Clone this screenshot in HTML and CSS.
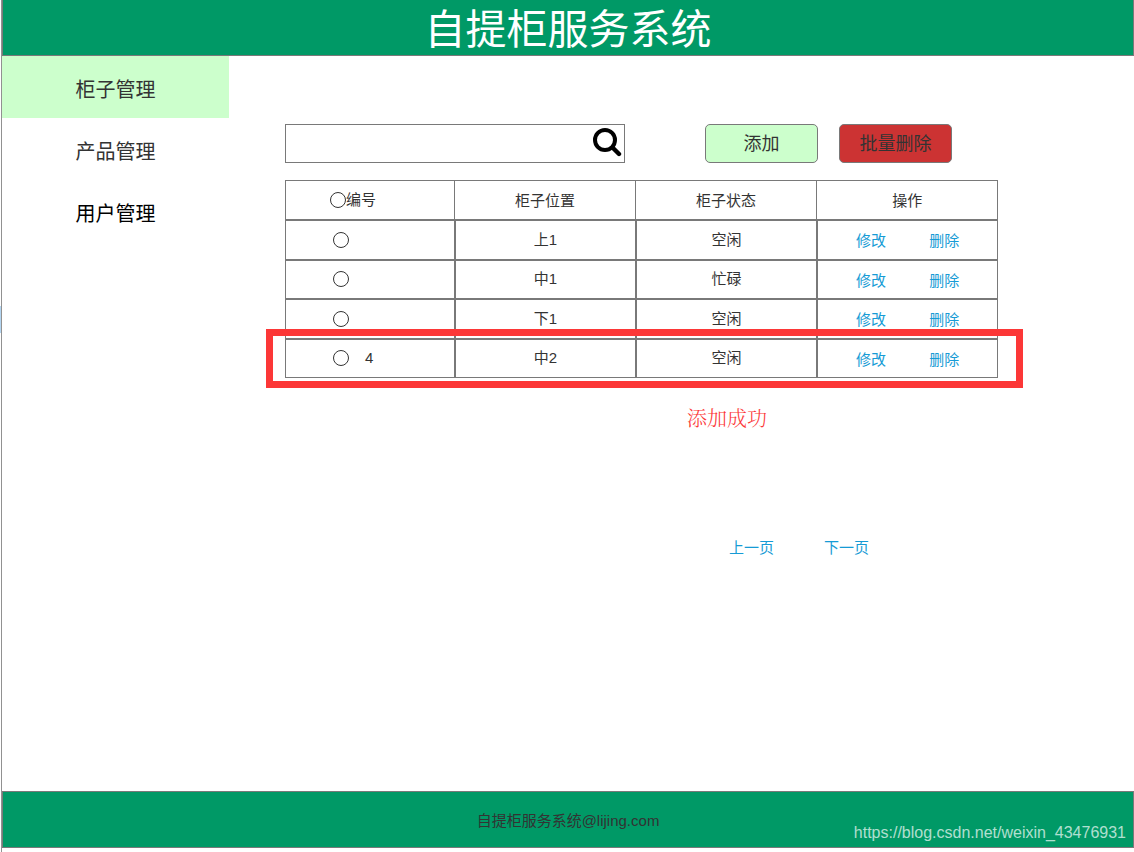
FILE: index.html
```html
<!DOCTYPE html>
<html lang="zh-CN">
<head>
  <meta charset="utf-8">
  <meta name="viewport" content="width=device-width, initial-scale=1">
  <title>自提柜服务系统</title>
  <link rel="stylesheet" href="styles.css">
</head>
<body>
  <div class="page">
    <header class="banner">
      <h1 class="banner-title">自提柜服务系统</h1>
    </header>

    <div class="content">
      <nav class="sidebar">
        <a class="nav-item nav-item-active" href="#">柜子管理</a>
        <a class="nav-item" href="#">产品管理</a>
        <a class="nav-item nav-item-dark" href="#">用户管理</a>
      </nav>

      <main class="main">
        <div class="toolbar">
          <form class="search">
            <input class="search-input" type="text" aria-label="搜索">
            <button class="search-button" type="button" aria-label="搜索">
              <svg width="30" height="30" viewBox="0 0 30 30" fill="none" stroke="#000" aria-hidden="true">
                <circle cx="13" cy="13" r="10" stroke-width="4"/>
                <path d="M20.5 20.5L27 27" stroke-width="4.4" stroke-linecap="round"/>
              </svg>
            </button>
          </form>
          <div class="actions">
            <button class="button button-add" type="button">添加</button>
            <button class="button button-delete" type="button">批量删除</button>
          </div>
        </div>

        <table class="lockers">
          <colgroup>
            <col class="col-id">
            <col>
            <col>
            <col>
          </colgroup>
          <thead>
            <tr>
              <th class="cell-id"><label class="pick"><input class="radio" type="radio" name="all">编号</label></th>
              <th>柜子位置</th>
              <th>柜子状态</th>
              <th>操作</th>
            </tr>
          </thead>
          <tbody>
            <tr>
              <td class="cell-id"><label class="pick"><input class="radio" type="radio" name="locker" aria-label="上1"></label></td>
              <td>上1</td>
              <td>空闲</td>
              <td class="cell-links"><a class="link" href="#">修改</a><a class="link" href="#">删除</a></td>
            </tr>
            <tr>
              <td class="cell-id"><label class="pick"><input class="radio" type="radio" name="locker" aria-label="中1"></label></td>
              <td>中1</td>
              <td>忙碌</td>
              <td class="cell-links"><a class="link" href="#">修改</a><a class="link" href="#">删除</a></td>
            </tr>
            <tr>
              <td class="cell-id"><label class="pick"><input class="radio" type="radio" name="locker" aria-label="下1"></label></td>
              <td>下1</td>
              <td>空闲</td>
              <td class="cell-links"><a class="link" href="#">修改</a><a class="link" href="#">删除</a></td>
            </tr>
            <tr class="row-new">
              <td class="cell-id"><label class="pick"><input class="radio" type="radio" name="locker">4</label></td>
              <td>中2</td>
              <td>空闲</td>
              <td class="cell-links"><a class="link" href="#">修改</a><a class="link" href="#">删除</a></td>
            </tr>
          </tbody>
        </table>

        <p class="message">添加成功</p>

        <div class="pager">
          <a class="link" href="#">上一页</a>
          <a class="link" href="#">下一页</a>
        </div>
      </main>
    </div>

    <footer class="footer">
      <span>自提柜服务系统@lijing.com</span>
      <span class="watermark">https://blog.csdn.net/weixin_43476931</span>
    </footer>
  </div>
</body>
</html>
```

FILE: styles.css
```css
* {
  box-sizing: border-box;
}

body {
  margin: 0;
  background: #fff;
  color: #333;
  font-family: "Liberation Sans", "Noto Sans CJK SC", sans-serif;
  font-size: 15px;
  line-height: 20px;
}

.page {
  position: relative;
  display: flex;
  flex-direction: column;
  min-height: 100vh;
  margin-left: 1px;
  padding-bottom: 4px;
  border-left: 1px solid #919191;
}

.page::before {
  content: "";
  position: absolute;
  left: -2px;
  top: 306px;
  width: 1px;
  height: 27px;
  background: #b4d6f2;
}

.banner {
  display: flex;
  justify-content: center;
  height: 56px;
  background: #009966;
  border: 1px solid #797979;
  border-top: 0;
}

.banner-title {
  margin: 0;
  color: #fff;
  font-size: 41px;
  font-weight: 400;
  line-height: 60px;
}

.content {
  display: flex;
  flex: 1;
}

.sidebar {
  width: 227px;
  flex: none;
}

.nav-item {
  display: block;
  height: 62px;
  padding-top: 4px;
  color: #333;
  font-size: 20px;
  line-height: 60px;
  text-align: center;
  text-decoration: none;
}

.nav-item-active {
  background: #ccffcc;
}

.nav-item-dark {
  color: #000;
}

.main {
  flex: 1;
  padding: 68px 12% 0 56px;
}

.toolbar {
  display: flex;
  gap: 80px;
  margin-bottom: 17px;
}

.search {
  display: flex;
  flex: 0 1 340px;
  height: 39px;
  border: 1px solid #797979;
}

.search-input {
  flex: 1;
  min-width: 0;
  padding: 0 8px;
  border: 0;
  outline: 0;
  background: none;
  font: inherit;
}

.search-button {
  display: flex;
  padding: 2px 2px 0 0;
  border: 0;
  background: none;
}

.actions {
  display: flex;
  gap: 21px;
}

.button {
  width: 113px;
  height: 39px;
  padding: 0;
  border: 1px solid #797979;
  border-radius: 5px;
  color: #333;
  font: inherit;
  font-size: 18px;
}

.button-add {
  background: #ccffcc;
}

.button-delete {
  background: #cc3333;
}

.lockers {
  width: 100%;
  height: 198px;
  border-collapse: separate;
  border-spacing: 0;
  table-layout: fixed;
}

.col-id {
  width: 170px;
}

.lockers th,
.lockers td {
  padding: 0;
  border: 1px solid #797979;
  font-weight: 400;
  text-align: center;
}

.lockers th {
  height: 40px;
  padding-top: 2px;
}

.lockers th + th {
  border-left: 0;
}

.lockers .cell-id {
  padding: 0 0 0 47px;
}

.lockers th.cell-id {
  padding-left: 44px;
}

.lockers .cell-links {
  padding-top: 3px;
}

.pick {
  display: flex;
  align-items: center;
}

td .pick {
  gap: 16px;
}

.radio {
  appearance: none;
  width: 16px;
  height: 16px;
  margin: 0;
  border: 1px solid #333;
  border-radius: 50%;
  background: #fff;
}

.radio:checked {
  background: #333;
}

.link {
  color: #169bd5;
  text-decoration: none;
}

.link + .link {
  margin-left: 43px;
}

/* frame round the row that was just added */
.row-new {
  position: relative;
}

.row-new .cell-id::after {
  content: "";
  position: absolute;
  inset: -10px -25px -10px -19px;
  border: 7px solid #fc3737;
  pointer-events: none;
}

.message {
  margin: 26px 0 104px;
  padding-left: 402px;
  color: #fc3737;
  font-family: "Liberation Serif", "Noto Serif CJK SC", "Noto Sans CJK SC", serif;
  font-size: 20px;
  font-weight: 300;
  line-height: 30px;
}

.pager {
  display: flex;
  gap: 7px;
  padding-left: 444px;
}

.footer {
  position: relative;
  display: flex;
  align-items: center;
  justify-content: center;
  height: 57px;
  padding-top: 2px;
  background: #009966;
  border: 1px solid #797979;
}

.watermark {
  position: absolute;
  right: 7px;
  bottom: 4px;
  color: rgba(255, 255, 255, 0.7);
  font-size: 16px;
}
```
